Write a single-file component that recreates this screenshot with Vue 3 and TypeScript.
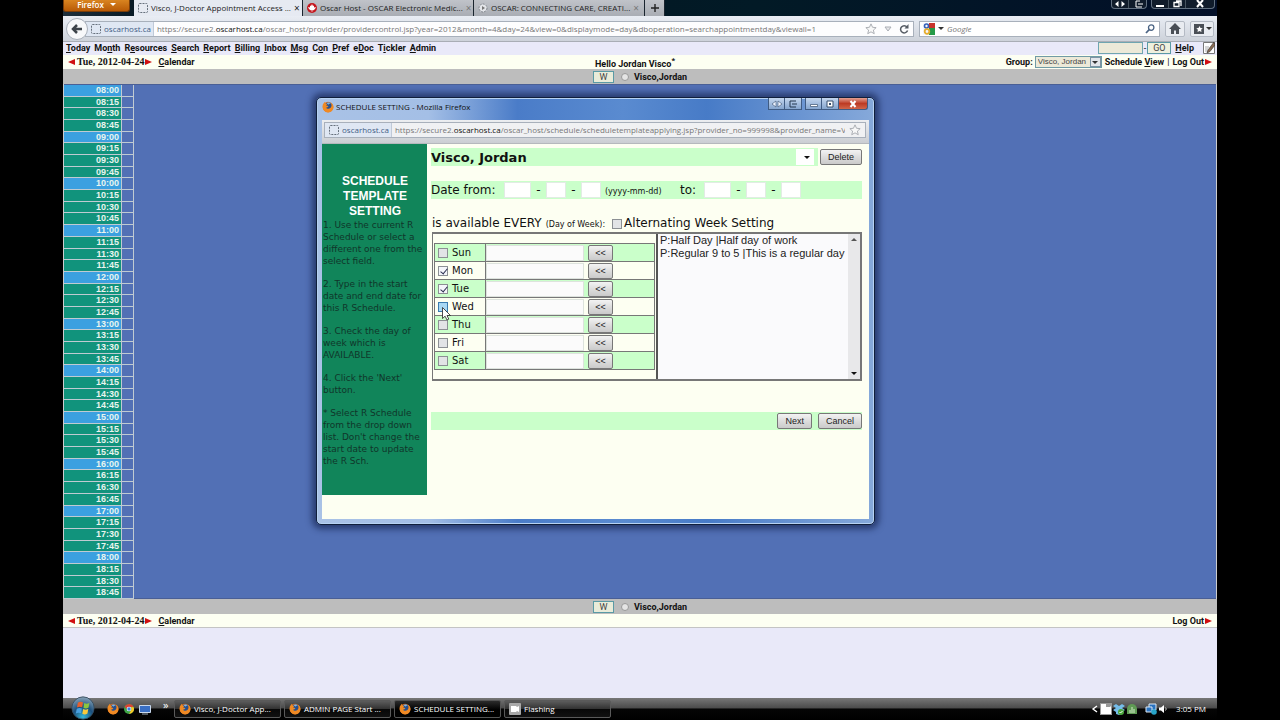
<script setup lang="ts">
import { ref } from 'vue'

interface MenuItem { before: string; key: string; after: string }
interface Day { name: string; checked: boolean; hover?: boolean }

const menu: MenuItem[] = [
  { before: '', key: 'T', after: 'oday' },
  { before: 'Mo', key: 'n', after: 'th' },
  { before: 'R', key: 'e', after: 'sources' },
  { before: '', key: 'S', after: 'earch' },
  { before: '', key: 'R', after: 'eport' },
  { before: '', key: 'B', after: 'illing' },
  { before: '', key: 'I', after: 'nbox' },
  { before: '', key: 'M', after: 'sg' },
  { before: 'C', key: 'o', after: 'n' },
  { before: '', key: 'P', after: 'ref' },
  { before: 'e', key: 'D', after: 'oc' },
  { before: 'T', key: 'i', after: 'ckler' },
  { before: '', key: 'A', after: 'dmin' },
]

const times: string[] = []
for (let h = 8; h < 19; h++) {
  for (const m of ['00', '15', '30', '45']) times.push(`${String(h).padStart(2, '0')}:${m}`)
}

const days = ref<Day[]>([
  { name: 'Sun', checked: false },
  { name: 'Mon', checked: true },
  { name: 'Tue', checked: true },
  { name: 'Wed', checked: false, hover: true },
  { name: 'Thu', checked: false },
  { name: 'Fri', checked: false },
  { name: 'Sat', checked: false },
])

const templates = ['P:Half Day |Half day of work', 'P:Regular 9 to 5 |This is a regular day']
</script>

<template>
  <div class="screen">
    <svg class="defs" aria-hidden="true">
      <symbol id="fox" viewBox="0 0 16 16">
        <circle cx="8" cy="8" r="7" fill="#e8701a" />
        <circle cx="8.6" cy="6.6" r="4.6" fill="#27508f" />
        <path d="M6 3c2-2 5-1 6 1-2-.5-3 0-3 1z" fill="#7fb4e0" />
        <path d="M1 5c1-2 2-3 3-4 0 2 1 3 3 3L5.500 6c1 .5 2 .5 3 .5-.5 2-2 2-3 2 1 2.500 4 2.500 6 .500 2-2 1.500-5 0-7 4 2 5.500 7 2 11-4 4-10 2-12-2-.8-2-.8-4-.5-6z" fill="#f08a24" />
      </symbol>
      <symbol id="arrow-left" viewBox="0 0 7 8"><path d="M7 1v6L0 4z" fill="#d01010" /></symbol>
      <symbol id="arrow-right" viewBox="0 0 7 8"><path d="M0 1v6l7-3z" fill="#d01010" /></symbol>
      <symbol id="star" viewBox="0 0 14 14">
        <path d="M7 1l1.800 4 4.200.400-3.200 2.900 1 4.200L7 10.300 3.200 12.500l1-4.200L1 5.400 5.200 5z" fill="#f8f8f8" stroke="#a0a4aa" />
      </symbol>
      <symbol id="site" viewBox="0 0 10 10">
        <rect x=".5" y=".5" width="9" height="9" rx="1" fill="none" stroke="#66707c" stroke-dasharray="2 1" />
      </symbol>
    </svg>

    <div class="desktop">
      <header class="tabs">
        <button class="firefox">Firefox <i class="caret white"></i></button>
        <div class="tab active"><svg class="ic10"><use href="#site" /></svg><span>Visco, J-Doctor Appointment Access ...</span><b>×</b></div>
        <div class="tab">
          <svg class="ic10" viewBox="0 0 10 10"><circle cx="5" cy="5" r="5" fill="#c5161d" /><path d="M5 1l1 2 1-.5v2l2-.5-1 2-1.500 1.200H5.300V9h-.6V7.200H3.500L2 6 1 4l2 .5v-2L4 3z" fill="#fff" /></svg>
          <span>Oscar Host - OSCAR Electronic Medic...</span><b>×</b>
        </div>
        <div class="tab">
          <svg class="ic10" viewBox="0 0 10 10"><circle cx="5" cy="5" r="4" fill="#e4e6ea" stroke="#80858c" stroke-dasharray="2 1" /><path d="M4 3l3 2-3 2z" fill="#777" /></svg>
          <span>OSCAR: CONNECTING CARE, CREATI...</span><b>×</b>
        </div>
        <button class="tab plus" aria-label="New tab"><svg class="ic10" viewBox="0 0 10 10"><path d="M5 1v8M1 5h8" stroke="#222" stroke-width="1.400" /></svg></button>
        <div class="win-buttons">
          <div class="wb-group">
            <button aria-label="Move"><svg viewBox="0 0 12 8"><path d="M4.500 1v6L1 4zM7.500 1v6L11 4z" fill="#fff" /></svg></button>
            <button aria-label="Send"><svg viewBox="0 0 12 8"><path d="M8 1H4v6h6M6 4h5" stroke="#fff" fill="none" /></svg></button>
          </div>
          <div class="wb-group">
            <button aria-label="Minimize"><svg viewBox="0 0 12 8"><path d="M2 6h8" stroke="#fff" stroke-width="2" /></svg></button>
            <button aria-label="Restore"><svg viewBox="0 0 12 8"><path d="M3 2.500h5v4H3zM5 1h5v5" stroke="#fff" fill="none" stroke-width="1.300" /></svg></button>
            <button class="wide" aria-label="Close"><svg viewBox="0 0 12 8"><path d="M3 0l6 7M9 0L3 7" stroke="#fff" stroke-width="2" /></svg></button>
          </div>
        </div>
      </header>

      <div class="navbar">
        <button class="back" aria-label="Back"><svg viewBox="0 0 14 14"><path d="M12 7H4M7 3L3 7l4 4" fill="none" stroke="#3d434a" stroke-width="2.500" /></svg></button>
        <div class="address">
          <span class="site"><svg class="ic10"><use href="#site" /></svg>oscarhost.ca</span>
          <span class="url">https://secure2.<strong>oscarhost.ca</strong>/oscar_host/provider/providercontrol.jsp?year=2012&amp;month=4&amp;day=24&amp;view=0&amp;displaymode=day&amp;dboperation=searchappointmentday&amp;viewall=1</span>
          <svg class="ic12"><use href="#star" /></svg>
          <svg class="ic8" viewBox="0 0 8 8"><path d="M1 2h6L4 6z" fill="#e8e8ea" stroke="#aaaeb5" /></svg>
          <svg class="ic10" viewBox="0 0 10 10"><path d="M8 3a3.600 3.600 0 1 0 .6 3.500" fill="none" stroke="#555b63" stroke-width="1.500" /><path d="M9.500 0v4.500H5.500z" fill="#555b63" /></svg>
        </div>
        <div class="search">
          <svg class="ic12" viewBox="0 0 12 12"><path d="M0 0h6v12H0z" fill="#f4f6fb" /><path d="M6 0h6v5H6z" fill="#c8342c" /><path d="M6 5h6v7H6z" fill="#259a48" /><circle cx="3.500" cy="3" r="2" fill="none" stroke="#3360b8" stroke-width="1.600" /><circle cx="4" cy="8.500" r="2.300" fill="none" stroke="#e6ac2c" stroke-width="1.800" /></svg>
          <i class="caret"></i>
          <input type="text" placeholder="Google" aria-label="Search with Google">
          <svg class="ic10" viewBox="0 0 10 10"><circle cx="6.200" cy="3.600" r="2.700" fill="none" stroke="#4b6484" stroke-width="1.300" /><path d="M4.200 5.600L1 9" stroke="#4b6484" stroke-width="1.700" /></svg>
        </div>
        <button class="tool" aria-label="Home"><svg class="ic12" viewBox="0 0 12 12"><path d="M6 0l6 6h-2v5H7V7.500H5V11H2V6H0z" fill="#4a4f56" /></svg></button>
        <button class="tool" aria-label="Bookmarks"><svg class="ic12" viewBox="0 0 12 12"><path d="M1 1h10v10H1z" fill="#4a4f56" /><path d="M6.500 3l1 2 2.200.300-1.600 1.500.4 2.200-2-1-2 1 .4-2.200L3.300 5.300 5.500 5z" fill="#fff" /></svg><i class="caret"></i></button>
      </div>

      <nav class="menu">
        <a v-for="(m, i) in menu" :key="i" href="#">{{ m.before }}<u>{{ m.key }}</u>{{ m.after }}</a>
        <form class="quick" @submit.prevent>
          <input type="text" aria-label="Quick search"><span>-</span><button>GO</button>
          <a href="#"><u>H</u>elp</a>
          <svg class="note" viewBox="0 0 12 12"><path d="M.5.5h11v11H.5z" fill="#fff" stroke="#777" /><path d="M2 5h4M2 7h3M2 9h3" stroke="#aaa" /><path d="M11 0L5 8l-1 3 3-1.500L12 3z" fill="#8a6b52" stroke="#333" stroke-width=".6" /></svg>
        </form>
      </nav>

      <div class="datebar">
        <div class="date"><svg><use href="#arrow-left" /></svg><time>Tue, 2012-04-24</time><svg><use href="#arrow-right" /></svg><a href="#"><u>C</u>alendar</a></div>
        <div class="hello">Hello Jordan Visco<sup>*</sup></div>
        <div class="right">
          <label for="group">Group:</label>
          <span class="group"><select id="group"><option>Visco, Jordan</option></select><span class="drop"><i class="caret"></i></span></span>
          <a href="#">Schedule <u>V</u>iew</a><em>|</em><a href="#">Log Out</a><svg><use href="#arrow-right" /></svg>
        </div>
      </div>
      <div class="graybar"><button>W</button><label><input type="radio" name="top">Visco,Jordan</label></div>

      <main class="schedule">
        <div class="times">
          <div v-for="t in times" :key="t" class="slot" :class="{ hour: t.endsWith('00') }"><a href="#">{{ t }}</a><span></span></div>
        </div>
      </main>

      <div class="graybar"><button>W</button><label><input type="radio" name="bottom">Visco,Jordan</label></div>
      <div class="datebar bottom">
        <div class="date"><svg><use href="#arrow-left" /></svg><time>Tue, 2012-04-24</time><svg><use href="#arrow-right" /></svg><a href="#"><u>C</u>alendar</a></div>
        <div class="right"><a href="#">Log Out</a><svg><use href="#arrow-right" /></svg></div>
      </div>
      <div class="blank"></div>

      <footer class="taskbar">
        <button class="start" aria-label="Start">
          <svg viewBox="0 0 28 28"><defs><radialGradient id="orb" cx=".5" cy=".9" r=".9"><stop offset="0" stop-color="#35b6d8" /><stop offset=".5" stop-color="#1c4f7c" /><stop offset="1" stop-color="#8aa4b8" /></radialGradient></defs><circle cx="14" cy="14" r="13" fill="url(#orb)" stroke="#34485a" /><path d="M8 8c2-1.500 4-1.500 6-.3l-1 5.500c-2-1-4-1-6 .3z" fill="#e8602c" /><path d="M15.500 8.300c2 1 4 1 6-.3l-1 5.500c-2 1.300-4 1.300-6 .3z" fill="#8cc63e" /><path d="M6.700 15c2-1.300 4-1.300 6-.3l-1 5.500c-2-1-4-1-6 .3z" fill="#4aa0e0" /><path d="M14.200 15.300c2 1 4 1 6-.3l-1 5.500c-2 1.300-4 1.300-6 .3z" fill="#fbc93a" /></svg>
        </button>
        <div class="quicklaunch">
          <svg class="ic12"><use href="#fox" /></svg>
          <svg class="ic12" viewBox="0 0 12 12"><circle cx="6" cy="6" r="5" fill="#3fa648" /><path d="M6 1a5 5 0 0 1 4.600 3H6L3.500 6 1.600 3.600A5 5 0 0 1 6 1z" fill="#dd4334" /><path d="M10.700 4.200A5 5 0 0 1 6 11l2.200-4V4z" fill="#f6c727" /><circle cx="6" cy="6" r="2.300" fill="#fff" /><circle cx="6" cy="6" r="1.700" fill="#3f7fe0" /></svg>
          <svg class="ic12" viewBox="0 0 12 12"><path d="M.5 2.500h11v7H.5z" fill="#3a6fc4" stroke="#c9d8ec" /><path d="M3 11h6" stroke="#9ab" /></svg>
        </div>
        <span class="more">»</span>
        <button class="task"><svg class="ic12"><use href="#fox" /></svg>Visco, J-Doctor App...</button>
        <button class="task"><svg class="ic12"><use href="#fox" /></svg>ADMIN PAGE Start ...</button>
        <button class="task current"><svg class="ic12"><use href="#fox" /></svg>SCHEDULE SETTING...</button>
        <button class="task"><svg class="ic12" viewBox="0 0 12 12"><rect width="12" height="12" rx="1" fill="#a8a8a8" /><path d="M2 3h5l1 1 2-1v6L8 8 7 9H2z" fill="#fff" /></svg>Flashing</button>
        <div class="tray">
          <svg class="ic8" viewBox="0 0 8 8"><path d="M6 1L2 4l4 3" fill="none" stroke="#fff" stroke-width="1.400" /></svg>
          <svg class="ic12" viewBox="0 0 12 12"><rect width="12" height="12" fill="#999" /><path d="M1 1h5v3h4l1-1v8H1z" fill="#fff" /></svg>
          <svg class="ic12" viewBox="0 0 12 12"><path d="M3 1l3 2 3-2 3 2-3 2 3 2-3 2v2l-3 1-3-1V9L0 7l3-2-3-2z" fill="#75bdea" /><circle cx="8" cy="9" r="3" fill="#4ba63c" /><path d="M6.500 9l1 1 2-2" stroke="#fff" fill="none" /></svg>
          <svg class="ic12" viewBox="0 0 12 12"><path d="M1 11V6a5 5 0 0 1 10 0v5z" fill="#5f9a54" /><path d="M4 10V7M6 10V4M8 10V6" stroke="#d4ebc8" /></svg>
          <svg class="ic12 gap" viewBox="0 0 12 12"><path d="M4 1h7v6H4z" fill="#2a73c0" stroke="#dce8f4" /><path d="M1 4h6v5H1z" fill="#2a73c0" stroke="#dce8f4" /><circle cx="9" cy="9" r="2.800" fill="#28a4c8" /></svg>
          <svg class="ic10" viewBox="0 0 10 10"><path d="M1 3.500h2L6 1v8L3 6.500H1z" fill="#fff" /><path d="M7.500 3.500q1.500 1.500 0 3" stroke="#ccc" fill="none" /></svg>
          <time>3:05 PM</time>
        </div>
      </footer>

      <section class="window" aria-label="Schedule setting">
        <div class="titlebar">
          <svg class="ic12"><use href="#fox" /></svg><span>SCHEDULE SETTING - Mozilla Firefox</span>
          <div class="pw-buttons">
            <button aria-label="Move"><svg viewBox="0 0 12 8"><path d="M5 1v6L1 4zM7 1v6l4-3z" fill="#eef4ff" stroke="#39516f" stroke-width=".6" /></svg></button>
            <button aria-label="Send"><svg viewBox="0 0 12 8"><path d="M9 1H3v6h6M5 4h5" stroke="#22364f" fill="none" /></svg></button>
            <button class="sep" aria-label="Minimize"><svg viewBox="0 0 12 8"><path d="M2.500 4.500h7v2h-7z" fill="#fff" stroke="#39516f" stroke-width=".7" /></svg></button>
            <button aria-label="Maximize"><svg viewBox="0 0 12 8"><path d="M3 1h6v6H3z" fill="#fff" stroke="#39516f" /><path d="M5 3h2v2H5z" fill="#39516f" /></svg></button>
            <button class="close" aria-label="Close"><svg viewBox="0 0 12 8"><path d="M3.500 1l5 6M8.500 1l-5 6" stroke="#fff" stroke-width="2" /></svg></button>
          </div>
        </div>
        <div class="popup">
          <div class="popbar">
            <div class="address">
              <span class="site"><svg class="ic10"><use href="#site" /></svg>oscarhost.ca</span>
              <span class="url">https://secure2.<strong>oscarhost.ca</strong>/oscar_host/schedule/scheduletemplateapplying.jsp?provider_no=999998&amp;provider_name=Visco</span>
              <svg class="ic12"><use href="#star" /></svg>
            </div>
          </div>
          <div class="content">
            <aside>
              <h1>SCHEDULE TEMPLATE SETTING</h1>
              <p>1. Use the current R Schedule or select a different one from the select field.</p>
              <p>2. Type in the start date and end date for this R Schedule.</p>
              <p>3. Check the day of week which is AVAILABLE.</p>
              <p>4. Click the 'Next' button.</p>
              <p>* Select R Schedule from the drop down list. Don't change the start date to update the R Sch.</p>
            </aside>
            <form @submit.prevent>
              <div class="band provider">
                <strong>Visco, Jordan</strong>
                <span class="pick"><select aria-label="Schedule"><option></option></select><i class="caret"></i></span>
                <span class="cell"><button class="btn">Delete</button></span>
              </div>
              <div class="band dates">
                <span class="from">Date from:</span>
                <input class="yr" type="text" aria-label="From year"><span>-</span><input type="text" aria-label="From month"><span>-</span><input type="text" aria-label="From day">
                <small>(yyyy-mm-dd)</small><span class="to">to:</span>
                <input class="yr" type="text" aria-label="To year"><span>-</span><input type="text" aria-label="To month"><span>-</span><input type="text" aria-label="To day">
              </div>
              <div class="avail">is available EVERY <small>(Day of Week):</small><label><input type="checkbox">Alternating Week Setting</label></div>
              <div class="frame">
                <table>
                  <tbody>
                    <tr v-for="(d, i) in days" :key="d.name">
                      <td class="day"><label><input v-model="d.checked" type="checkbox" :class="{ hover: d.hover }">{{ d.name }}</label></td>
                      <td><div class="assign"><input type="text" :aria-label="d.name + ' template'"><button class="btn" :aria-label="'Assign template ' + (i + 1)">&lt;&lt;</button></div></td>
                    </tr>
                  </tbody>
                </table>
                <div class="list">
                  <select multiple size="8" aria-label="Templates"><option v-for="t in templates" :key="t">{{ t }}</option></select>
                  <div class="scroll"><i class="up"></i><i class="caret"></i></div>
                </div>
              </div>
              <div class="band actions"><button class="btn">Next</button><button class="btn">Cancel</button></div>
            </form>
          </div>
        </div>
        <svg class="pointer" viewBox="0 0 9 14"><path d="M.5.5v11l2.600-2.300L5 13l1.800-.9L5 8.500h3.500z" fill="#fff" stroke="#222" stroke-width=".8" /></svg>
      </section>
    </div>
  </div>
</template>

<style>
body { margin: 0; background: #000; }
</style>

<style scoped>
* { box-sizing: border-box; }
button, input, select { font: inherit; color: inherit; margin: 0; padding: 0; border: 0; border-radius: 0; outline: 0; min-width: 0; }
button { white-space: nowrap; }
a { color: #111; text-decoration: none; }
svg { flex: none; display: block; }
.defs { position: absolute; width: 0; height: 0; }
.ic8 { width: 8px; height: 8px; }
.ic10 { width: 10px; height: 10px; }
.ic12 { width: 12px; height: 12px; }
.caret { flex: none; width: 0; height: 0; border: 3px solid transparent; border-top-color: #333; border-bottom: 0; }
.caret.white { border-top-color: #fff; }
.screen { background: #000; padding: 0 63px; }
.desktop { position: relative; display: flex; flex-direction: column; min-height: 100vh; font: 8px/12px "Open Sans", "Noto Sans", sans-serif; color: #222; background: #e9e9f9; }

.tabs { display: flex; height: 16px; background: linear-gradient(90deg, #1d2f3c, #02141f 8%, #021a26 60%, #020f28); }
.firefox { width: 67px; height: 12px; margin-right: 4px; padding-bottom: 2px; background: linear-gradient(#d98420, #b85a06); border: 1px solid #7a3d08; border-top: 0; border-radius: 0 0 3px 3px; color: #fff; font-weight: 600; font-size: 8px; line-height: 9px; display: flex; align-items: center; justify-content: center; gap: 6px; }
.tab { display: flex; align-items: center; gap: 3px; width: 171px; padding: 0 5px 0 4px; background: linear-gradient(#c0c3c9, #a9adb4); border-right: 1px solid #1a242e; color: #222; white-space: nowrap; }
.tab.active { width: 169px; background: #e6eaf2; }
.tab span { flex: 1; }
.tab b { color: #777; font-weight: 400; font-size: 10px; }
.tab.active b { color: #222; }
.tab.plus { width: 20px; justify-content: center; padding: 0; }
.win-buttons { display: flex; gap: 4px; margin-left: auto; padding-right: 2px; height: 9px; }
.wb-group { display: flex; border: 1px solid #617080; border-top: 0; border-radius: 0 0 4px 4px; background: #101c2b; overflow: hidden; }
.wb-group button { width: 17px; background: none; display: grid; place-items: center; border-right: 1px solid #46535f; }
.wb-group button:last-child { border-right: 0; }
.wb-group .wide { width: 28px; }
.wb-group svg { width: 12px; height: 8px; }

.navbar { display: flex; align-items: center; height: 26px; padding: 0 3px; background: linear-gradient(#e9edf4, #cdd2da); border-bottom: 1px solid #a9adb5; }
.back { width: 22px; height: 22px; border-radius: 50%; background: #f7f8fa; border: 1px solid #a9b0ba; display: grid; place-items: center; z-index: 1; }
.back svg { width: 14px; height: 14px; }
.address { flex: 1; min-width: 0; display: flex; align-items: center; gap: 7px; height: 16px; padding-right: 4px; background: #fdfdfe; border: 1px solid #a8b0bb; overflow: hidden; }
.navbar .address { margin-left: -3px; }
.site { align-self: stretch; display: flex; align-items: center; gap: 3px; padding: 0 2px 0 5px; background: #dfe7f3; border-right: 1px solid #c0cad8; color: #3f5d86; }
.address .site { margin-right: -4px; }
.url { flex: 1; min-width: 0; overflow: hidden; white-space: nowrap; color: #777; }
.url strong { font-weight: 400; color: #111; }
.search { display: flex; align-items: center; gap: 3px; width: 241px; height: 16px; margin: 0 5px; padding: 0 4px 0 3px; background: #fff; border: 1px solid #a8b0bb; }
.search input { flex: 1; background: none; font-style: italic; }
.search input::placeholder { color: #777; }
.tool { display: flex; align-items: center; justify-content: center; gap: 1px; width: 20px; height: 16px; margin-right: 5px; background: #e9ecf1; border: 1px solid #b4bac4; border-radius: 2px; }
.tool:last-child { width: 24px; margin-right: 0; }

.menu, .datebar, .graybar { font: 700 9px/12px Roboto, "Liberation Sans", sans-serif; color: #111; }
.menu { display: flex; align-items: flex-start; gap: 4px; height: 13px; padding: 0 2px 0 3px; background: #e9e9f9; }
.quick { display: flex; align-items: center; gap: 1px; margin-left: auto; font-weight: 400; }
.quick input { width: 45px; height: 12px; background: #ece9d8; border: 1px solid #6fa5b0; }
.quick button, .graybar button { width: 24px; height: 12px; background: #eef0de; border: 1px solid #5a9aa5; font-weight: 400; line-height: 10px; color: #444; }
.quick a { margin: 0 8px 0 3px; font-weight: 700; }
.note { width: 12px; height: 12px; }
.datebar { display: grid; grid-template-columns: 1fr auto 1fr; align-items: center; height: 14px; padding: 0 5px; background: #fdfff2; }
.datebar.bottom { grid-template-columns: 1fr auto; border-bottom: 1px solid #c4c4c4; }
.datebar svg { width: 7px; height: 8px; }
.date { display: flex; align-items: center; gap: 1px; }
.date time { margin-left: 1px; font: 700 10px/12px "Liberation Serif", serif; }
.date a { margin-left: 5px; }
.hello { align-self: end; margin-right: 10px; line-height: 10px; }
.hello sup { line-height: 0; font-size: 8px; }
.right { display: flex; align-items: center; justify-content: flex-end; }
.right em { margin: 0 3px; font-style: normal; font-weight: 400; }
.right svg { margin-left: 1px; }
.group { display: flex; align-items: center; width: 67px; height: 12px; margin: 0 3px 0 2px; background: #ece9d8; border: 1px solid #6f9ba5; font: 8px/10px "Liberation Sans", Arial, sans-serif; color: #444; }
.group select { flex: 1; appearance: none; background: none; padding-left: 2px; }
.drop { align-self: stretch; display: flex; align-items: center; justify-content: center; width: 11px; background: #e2e5ea; border: 1px solid #7d93a3; }
.graybar { display: flex; align-items: center; justify-content: center; gap: 7px; height: 15px; background: #bdbdbd; }
.graybar label { display: flex; align-items: center; gap: 5px; }
.graybar input { appearance: none; width: 8px; height: 8px; border: 1px solid #999; border-radius: 50%; background: #e4e4e4; }
.graybar button { width: 21px; background: #e9ebd9; }

.schedule { flex: 1; display: flex; padding-top: 1px; background: #5270b5; box-shadow: inset 0 -1px #4a5f95, inset 0 1px #4a5f95; border: 1px solid #ccc; border-width: 0 1px; }
.times { width: 70px; display: grid; grid-auto-rows: 1fr; }
.slot { min-height: 0; display: flex; font: 700 9px/10px "Liberation Sans", Arial, sans-serif; border-bottom: 1px solid #c0cbd2; }
.slot a { flex: 1; padding-right: 2px; text-align: right; color: #e9f5ef; background: #11937c; border-right: 1px solid #c0cbd2; }
.slot.hour a { background: #3ba0e0; }
.slot span { width: 12px; border-right: 1px solid #c0cbd2; }
.blank { height: 70px; }

.taskbar { display: flex; align-items: center; height: 22px; padding-right: 11px; background: linear-gradient(#777 0, #4b4b4b 45%, #050505 50%, #000); color: #fff; }
.start { align-self: flex-end; width: 40px; height: 24px; background: none; display: grid; place-items: center; }
.start svg { width: 24px; height: 24px; }
.quicklaunch { display: flex; gap: 4px; margin-left: 4px; }
.more { width: 10px; margin: -8px 1px 0 12px; font-size: 11px; }
.task { display: flex; align-items: center; gap: 3px; width: 107px; height: 18px; margin-right: 3px; padding-left: 4px; background: linear-gradient(#5c5c5c, #333 48%, #080808 52%, #111); border: 1px solid #5a5a5a; border-radius: 2px; }
.task.current { background: linear-gradient(#2c2c2c, #000 55%); border-color: #555; }
.tray { display: flex; align-items: center; gap: 1px; margin-left: auto; }
.tray .gap { margin-left: 6px; }
.tray time { margin-left: 7px; white-space: nowrap; }

.window { position: absolute; left: 253px; top: 97px; width: 559px; display: flex; flex-direction: column; padding: 0 5px 5px; background: linear-gradient(90deg, #a9c2e6 0, #a4bfe6 20%, #4a7cc8 36%, #5a8bd0 55%, #477bc7 70%, #86a9da 100%); border: 1px solid #101f3c; border-radius: 5px; box-shadow: inset 0 0 0 1px #b7d2f2, 0 0 6px 4px rgba(18, 32, 75, .65); }
.titlebar { display: flex; align-items: center; gap: 2px; height: 22px; padding-bottom: 4px; color: #111; }
.pw-buttons { display: flex; align-self: start; margin-left: auto; margin-right: 1px; }
.pw-buttons button { width: 17px; height: 12px; display: grid; place-items: center; background: linear-gradient(#c3d6ee, #86a6cf); border: 1px solid #405c83; border-top: 0; border-left-width: 0; }
.pw-buttons button:first-child, .pw-buttons .sep { border-left-width: 1px; }
.pw-buttons .sep { margin-left: 3px; }
.pw-buttons .close { width: 29px; background: linear-gradient(#e3a193, #bd3b24 50%, #d0664a); border-radius: 0 0 3px 0; }
.pw-buttons svg { width: 12px; height: 8px; }
.popup { background: #fdfff2; }
.popbar { height: 24px; padding: 2px 3px 6px 2px; background: linear-gradient(#eceef1, #cbced3); border-bottom: 1px solid #b5b8bd; }
.popbar .address { background: #f0f1f3; gap: 4px; }
.popbar .site { margin-right: -1px; padding-left: 4px; }
.content { display: flex; align-items: flex-start; gap: 4px; min-height: 375px; padding: 0 7px 0 0; color: #111; font: 12px/15px "DejaVu Sans", Verdana, sans-serif; }
aside { flex: none; width: 105px; min-height: 351px; padding: 30px 0 0 1px; background: #11855a; font-size: 9px; line-height: 12px; color: #10362a; }
aside h1 { margin: 0; padding: 0 15px; font: 700 12px/15px "Liberation Sans", Arial, sans-serif; color: #fff; text-align: center; }
aside p { margin: 0 0 11px; }
form { min-width: 0; }
.content form { flex: 1; padding-top: 4px; }
.band { display: flex; align-items: center; height: 18px; background: #caffca; }
.provider strong { flex: 1; font-size: 13px; }
.pick { display: flex; align-items: center; width: 18px; height: 16px; margin-right: 4px; padding-right: 4px; background: #fff; }
.pick select { width: 11px; appearance: none; background: none; }
.pick .caret, .scroll .caret { border-top-color: #111; }
.cell { display: flex; align-items: center; height: 18px; padding-left: 2px; background: #fdfff2; }
.btn { height: 16px; padding: 0 7px; background: linear-gradient(#f3f3f3, #ddd 50%, #cacaca); border: 1px solid #777; border-radius: 2px; font: 9px/12px "Liberation Sans", Arial, sans-serif; color: #222; }
.dates { margin-top: 15px; }
.dates input { width: 20px; height: 16px; background: #fff; border: 1px solid #e2ece4; }
.dates .yr { width: 27px; }
.dates span { width: 15px; text-align: center; }
.dates .from { width: 73px; text-align: left; }
.dates small { width: 79px; padding: 2px 0 0 4px; }
.dates .to { width: 24px; text-align: left; }
small { font-size: 8px; }
.avail { display: flex; align-items: center; gap: 4px; height: 15px; margin: 17px 0 1px 1px; white-space: nowrap; }
.avail small { padding-top: 2px; }
.avail label { display: flex; align-items: center; gap: 2px; margin-left: 3px; }
input[type="checkbox"] { appearance: none; flex: none; width: 10px; height: 10px; background: #e2e4e6; border: 1px solid #8c9094; }
input[type="checkbox"]:checked { background: #f4f6fa; }
input[type="checkbox"]:checked::after { content: ""; display: block; width: 3px; height: 6px; margin: 0 0 0 3px; border: solid #2c3050; border-width: 0 1px 1px 0; transform: rotate(40deg); }
input.hover { background: #a8d8f4; border-color: #3a7bb0; }
.frame { display: flex; align-items: center; height: 149px; margin-left: 1px; border: 2px solid #777; border-left-width: 1px; }
table { flex: 1; border-collapse: collapse; margin: 0 1px; font-size: 10px; line-height: 12px; }
tr { height: 18px; }
tr:nth-child(odd) { background: #caffca; }
td { padding: 0; border: 1px solid #777; }
.day { width: 51px; }
.day label { display: flex; align-items: center; gap: 4px; padding-left: 3px; }
.assign { display: flex; align-items: center; gap: 4px; }
.assign input { width: 98px; height: 16px; background: #fbfbfb; border: 1px solid #dde3dd; }
.assign .btn { width: 25px; padding: 0; }
.list { flex: none; width: 204px; height: 100%; display: flex; background: #fafafc; border-left: 2px solid #555; }
.list select { flex: 1; overflow: hidden; background: none; color: #222; font: 11px/13px "Liberation Sans", Arial, sans-serif; }
.list option { padding: 0 2px; min-height: 13px; height: 13px; }
.scroll { width: 12px; display: flex; flex-direction: column; justify-content: space-between; align-items: center; padding: 4px 0; background: #e8e8ea; }
.up { border: 3px solid transparent; border-bottom-color: #555; border-top: 0; }
.actions { justify-content: flex-end; gap: 6px; margin-top: 31px; }
.pointer { position: absolute; left: 125px; top: 209px; width: 9px; height: 14px; }
</style>
